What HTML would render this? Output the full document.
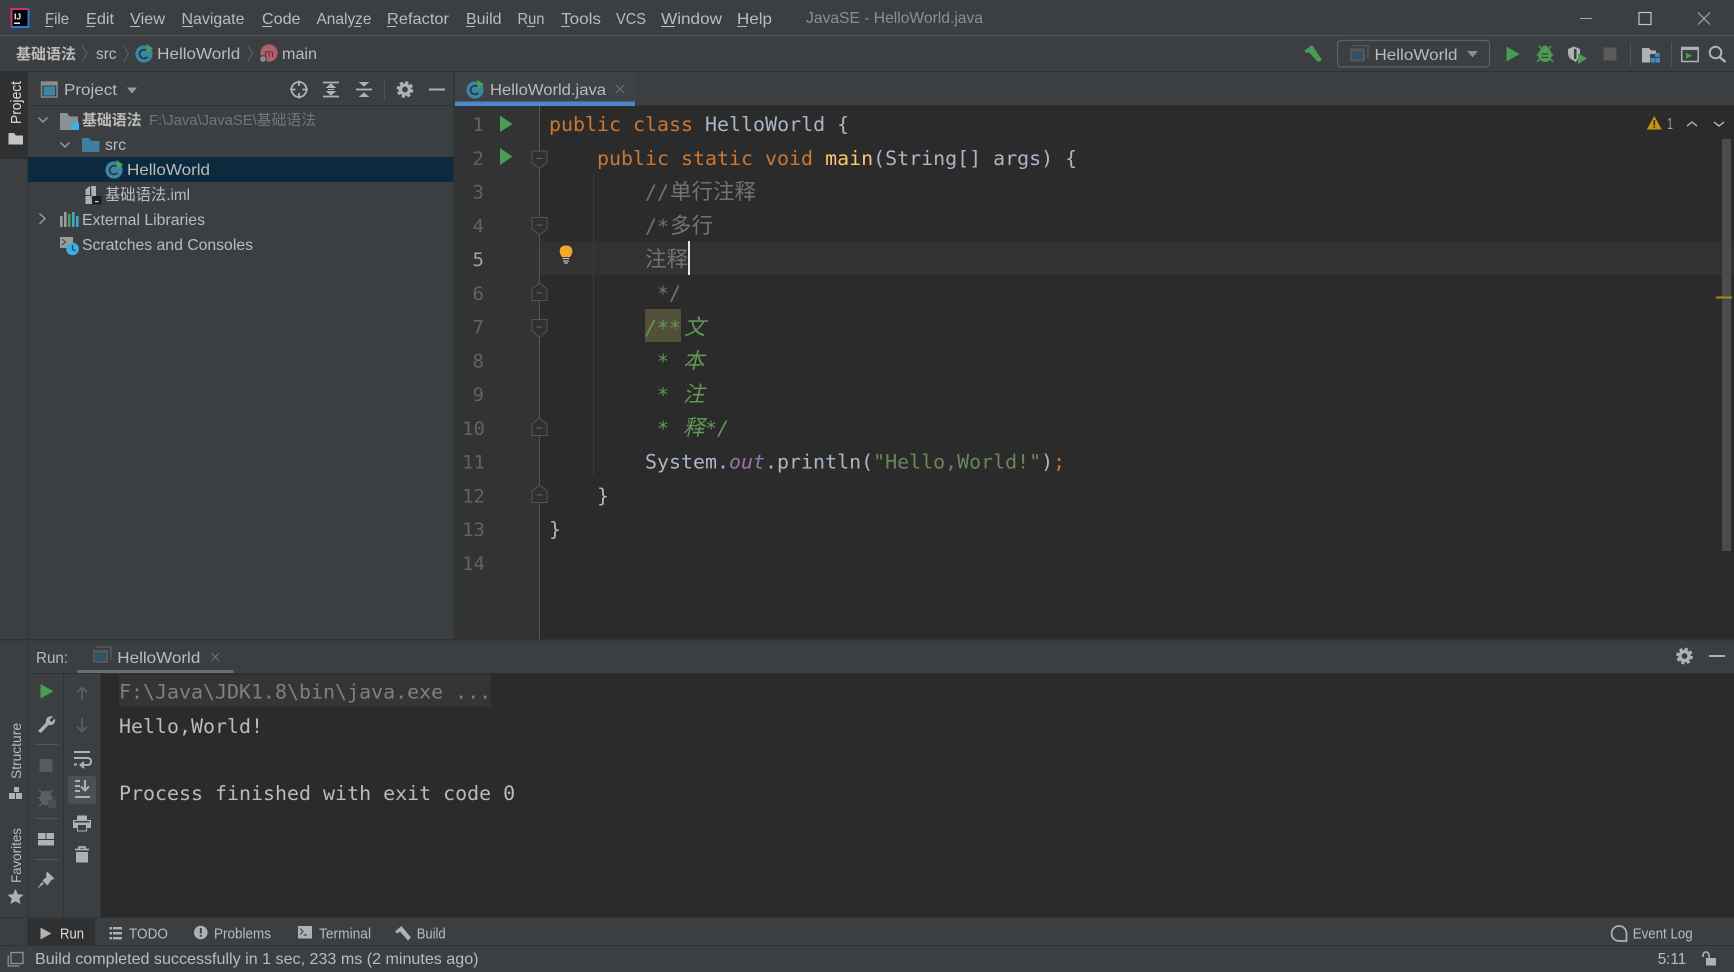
<!DOCTYPE html>
<html><head><meta charset="utf-8"><title>JavaSE - HelloWorld.java</title>
<style>
html,body{margin:0;padding:0;background:#3c3f41;overflow:hidden}
svg{display:block;position:absolute;left:0;top:0}
text{font-family:"Liberation Sans","Noto Sans CJK SC",sans-serif;font-size:16px;fill:#bbbbbb}
.s{font-size:14.5px}
.m,.m tspan{font-family:"DejaVu Sans Mono","Noto Sans CJK SC",monospace;font-size:19.95px;fill:#a9b7c6}
.m tspan.k{fill:#cc7832}
.c,.c tspan{fill:#737373}
.d,.d tspan{fill:#629755;font-style:italic}
.m tspan.cj{font-family:"Noto Sans CJK SC",sans-serif;font-size:21.5px}
.n{font-family:"DejaVu Sans Mono",monospace;font-size:19px;fill:#606366;text-anchor:end}
.con{font-family:"DejaVu Sans Mono",monospace;font-size:19.95px;fill:#bbbbbb}
</style></head><body>
<svg width="1734" height="972" viewBox="0 0 1734 972" xmlns="http://www.w3.org/2000/svg">
<defs>
<g id="cls"><circle cx="9" cy="10" r="8.6" fill="#3d86a3"/><path d="M12.4 7.2A4.4 4.4 0 1 0 12.4 12.8" fill="none" stroke="#1f3945" stroke-width="1.7"/><path d="M11.5 0V9L18 4.5Z" fill="#4aa257"/></g>
<g id="cfg"><path d="M3 0H18V13" fill="none" stroke="#54585a" stroke-width="1.6"/><rect x="0" y="3" width="15" height="13" fill="#54585a"/><rect x="2" y="6" width="11" height="8" fill="#2f5564"/></g>
<g id="foldd"><path d="M-7.5-8.5H7.5V3L0 9-7.5 3Z" fill="#2f3031" stroke="#555"/><path d="M-3-1H3" stroke="#666"/></g>
<g id="foldu"><path d="M-7.5 8.5H7.5V-3L0-9-7.5-3Z" fill="#2f3031" stroke="#555"/><path d="M-3 1H3" stroke="#666"/></g>
</defs>

<rect width="1734" height="972" fill="#3c3f41"/>

<!-- title bar -->
<rect x="0" y="35" width="1734" height="1" fill="#515658"/>
<rect x="11.5" y="9" width="17" height="18" fill="#000"/>
<path d="M11.5 27V9H28.5" fill="none" stroke="#d0307a" stroke-width="2"/>
<path d="M28.5 9V27H11.5" fill="none" stroke="#2a78d8" stroke-width="2"/>
<text x="14" y="19.5" style="font-size:8.5px;font-weight:bold;fill:#fff">IJ</text>
<rect x="14" y="22.5" width="6" height="1.4" fill="#fff"/>
<text x="45" y="24" textLength="24" lengthAdjust="spacingAndGlyphs">File</text><rect x="45" y="26" width="8" height="1" fill="#bbb"/>
<text x="86" y="24" textLength="28" lengthAdjust="spacingAndGlyphs">Edit</text><rect x="86" y="26" width="9" height="1" fill="#bbb"/>
<text x="130" y="24" textLength="35" lengthAdjust="spacingAndGlyphs">View</text><rect x="130" y="26" width="10" height="1" fill="#bbb"/>
<text x="181.5" y="24" textLength="63" lengthAdjust="spacingAndGlyphs">Navigate</text><rect x="182" y="26" width="11" height="1" fill="#bbb"/>
<text x="262" y="24" textLength="38.5" lengthAdjust="spacingAndGlyphs">Code</text><rect x="262" y="26" width="10" height="1" fill="#bbb"/>
<text x="316.5" y="24" textLength="55" lengthAdjust="spacingAndGlyphs">Analyze</text><rect x="354" y="26" width="7" height="1" fill="#bbb"/>
<text x="387" y="24" textLength="62" lengthAdjust="spacingAndGlyphs">Refactor</text><rect x="387" y="26" width="9" height="1" fill="#bbb"/>
<text x="466" y="24" textLength="35.5" lengthAdjust="spacingAndGlyphs">Build</text><rect x="466" y="26" width="9" height="1" fill="#bbb"/>
<text x="517.5" y="24" textLength="27" lengthAdjust="spacingAndGlyphs">Run</text><rect x="527" y="26" width="8" height="1" fill="#bbb"/>
<text x="561" y="24" textLength="40" lengthAdjust="spacingAndGlyphs">Tools</text><rect x="561" y="26" width="9" height="1" fill="#bbb"/>
<text x="616" y="24" textLength="30" lengthAdjust="spacingAndGlyphs">VCS</text>
<text x="661" y="24" textLength="61" lengthAdjust="spacingAndGlyphs">Window</text><rect x="661" y="26" width="14" height="1" fill="#bbb"/>
<text x="737" y="24" textLength="35" lengthAdjust="spacingAndGlyphs">Help</text><rect x="737" y="26" width="10" height="1" fill="#bbb"/>
<text x="806" y="23" textLength="177" lengthAdjust="spacingAndGlyphs" style="fill:#8c8e90">JavaSE - HelloWorld.java</text>
<path d="M1580 18.5H1592" stroke="#aaa" stroke-width="1"/>
<rect x="1639" y="12.5" width="12" height="12" fill="none" stroke="#c4c4c4" stroke-width="1.2"/>
<path d="M1698 12.5L1710 24.5M1710 12.5L1698 24.5" stroke="#b0b0b0" stroke-width="1"/>

<!-- breadcrumb / toolbar -->
<rect x="0" y="71" width="1734" height="1" fill="#323232"/>
<text x="16" y="59" textLength="60" lengthAdjust="spacingAndGlyphs" style="font-weight:bold;font-size:15px">基础语法</text>
<path d="M82 45L87 53.5L82 62" fill="none" stroke="#5f6163"/>
<text x="96" y="59" textLength="20.5" lengthAdjust="spacingAndGlyphs">src</text>
<path d="M123.5 45L128.5 53.5L123.5 62" fill="none" stroke="#5f6163"/>
<use href="#cls" x="135" y="44"/>
<text x="157.2" y="59" textLength="83" lengthAdjust="spacingAndGlyphs">HelloWorld</text>
<path d="M247.5 45L252.5 53.5L247.5 62" fill="none" stroke="#5f6163"/>
<circle cx="269" cy="53" r="8.6" fill="#b0626a"/>
<text x="264.5" y="57" style="font-size:11px;fill:#5a2b30">m</text>
<circle cx="263" cy="59" r="3.4" fill="#8a8d90" stroke="#3c3f41"/>
<text x="282" y="59" textLength="35" lengthAdjust="spacingAndGlyphs">main</text>

<path d="M1304.5 50.5L1312 45L1322 60L1318 62L1309 52.5L1306 53Z" fill="#499c54"/>
<rect x="1337.5" y="40.5" width="152" height="26.5" rx="3.5" fill="none" stroke="#5e6060" stroke-width="1.2"/>
<use href="#cfg" x="1350" y="45.5"/>
<text x="1374.5" y="60" textLength="83" lengthAdjust="spacingAndGlyphs">HelloWorld</text>
<path d="M1467 51H1478L1472.5 57.5Z" fill="#8c8e90"/>
<path d="M1506.5 46.5V61.5L1519.5 54Z" fill="#499c54"/>
<g fill="#499c54"><ellipse cx="1545" cy="55" rx="6.8" ry="7"/><circle cx="1545" cy="49" r="3.5"/><path d="M1539 46L1542 49.5M1551 46L1548 49.5M1536.5 55H1553.5M1537 61.5L1540 59M1553 61.5L1550 59" stroke="#499c54" stroke-width="1.6" fill="none"/><path d="M1541.5 54H1548.5M1541.5 57.5H1548.5" stroke="#3c3f41" stroke-width="1.2"/></g>
<path d="M1568 49L1574 46.5L1580 49V55L1576 62L1570 58.5Q1568 56 1568 53Z" fill="#afb1b3"/><rect x="1574" y="49" width="2.5" height="10" fill="#3c3f41"/>
<path d="M1578 53V64L1587 58.5Z" fill="#499c54"/>
<rect x="1603.5" y="47.5" width="13" height="13" fill="#5a5a5a"/>
<rect x="1630" y="42" width="1" height="24" fill="#515658"/>
<path d="M1642 48H1649L1651 50.5H1656V54H1650V62.5H1642Z" fill="#afb1b3"/>
<g fill="#3c8dc4"><rect x="1655" y="53" width="4.5" height="4"/><rect x="1650.5" y="58" width="4.5" height="4.5"/><rect x="1655.5" y="58" width="4.5" height="4.5"/></g>
<rect x="1671" y="42" width="1" height="24" fill="#515658"/>
<rect x="1681.7" y="47.5" width="16.5" height="14" fill="none" stroke="#afb1b3" stroke-width="1.5"/><rect x="1681" y="47" width="18" height="3" fill="#afb1b3"/>
<path d="M1686 52.5V59L1692 55.7Z" fill="#499c54"/>
<circle cx="1715.5" cy="52.5" r="5.8" fill="none" stroke="#afb1b3" stroke-width="2"/><path d="M1719.5 57L1725.5 62" stroke="#afb1b3" stroke-width="2.4"/>

<!-- left stripe -->
<rect x="27" y="72" width="1" height="845" fill="#323232"/>
<rect x="0" y="72" width="27" height="87" fill="#2e3032"/>
<text transform="translate(21,124) rotate(-90)" textLength="43" lengthAdjust="spacingAndGlyphs" style="font-size:14.5px;fill:#dedede">Project</text>
<path d="M8.5 133H14L16 135.5H23V144.5H8.5Z" fill="#c4c4c4"/>
<text transform="translate(21,779) rotate(-90)" textLength="56" lengthAdjust="spacingAndGlyphs" style="font-size:14px">Structure</text>
<g fill="#afb1b3"><rect x="9" y="793" width="6" height="6"/><rect x="16" y="793" width="6" height="6"/><rect x="14" y="787" width="5" height="5"/></g>
<text transform="translate(21,883) rotate(-90)" textLength="55" lengthAdjust="spacingAndGlyphs" style="font-size:14px">Favorites</text>
<path d="M15.5 889L17.8 894.2L23.5 894.8L19.3 898.5L20.5 904L15.5 901.2L10.5 904L11.7 898.5L7.5 894.8L13.2 894.2Z" fill="#afb1b3"/>

<!-- project panel -->
<rect x="41.5" y="82" width="15.5" height="15" fill="#3c3f41" stroke="#8a8d8f" stroke-width="1.4"/><rect x="41" y="82" width="16" height="3.5" fill="#8a8d8f"/><rect x="43.5" y="86.5" width="11.5" height="9" fill="#3a87a8"/>
<text x="64" y="95" textLength="53" lengthAdjust="spacingAndGlyphs">Project</text>
<path d="M127 87.5H137L132 93.5Z" fill="#999"/>
<circle cx="299" cy="89.5" r="7.5" fill="none" stroke="#afb1b3" stroke-width="1.8"/><path d="M299 80.5V86M299 93V98.5M290 89.5H295.5M302.5 89.5H308" stroke="#afb1b3" stroke-width="1.8"/>
<path d="M323 82.5H339M323 96.5H339" stroke="#afb1b3" stroke-width="1.8"/><path d="M327 87.5L331 84L335 87.5ZM327 91.5L331 95L335 91.5Z" fill="#afb1b3" stroke="#afb1b3"/><path d="M328 89.5H334" stroke="#afb1b3"/>
<path d="M356 89.5H372" stroke="#afb1b3" stroke-width="1.8"/><path d="M360 82.5L364 86L368 82.5ZM360 96.5L364 93L368 96.5Z" fill="#afb1b3" stroke="#afb1b3"/>
<rect x="384" y="79" width="1" height="21" fill="#4c5052"/>
<circle cx="405" cy="89.5" r="4.6" fill="none" stroke="#afb1b3" stroke-width="3.4"/><circle cx="405" cy="89.5" r="7.2" fill="none" stroke="#afb1b3" stroke-width="2.4" stroke-dasharray="3.2 2.45"/>
<path d="M429 89.5H445" stroke="#afb1b3" stroke-width="2"/>
<rect x="28" y="105" width="426" height="1" fill="#323232"/>

<path d="M38.5 117.5L43 122L47.5 117.5" fill="none" stroke="#9a9c9e" stroke-width="1.4"/>
<path d="M60 113H67L69.5 116.5H78V130H60Z" fill="#8a9197"/><rect x="71.5" y="122.5" width="7.5" height="7.5" fill="#3bb1e0"/>
<text x="82" y="125" textLength="59.5" lengthAdjust="spacingAndGlyphs" style="font-weight:bold;font-size:15px">基础语法</text>
<text x="149" y="125" textLength="167" lengthAdjust="spacingAndGlyphs" style="fill:#737577;font-size:15px">F:\Java\JavaSE\基础语法</text>

<path d="M60.5 142.5L65 147L69.5 142.5" fill="none" stroke="#9a9c9e" stroke-width="1.4"/>
<path d="M82 138H89L91.5 141H99.5V152H82Z" fill="#3d7f9e"/>
<text x="105" y="150" textLength="21" lengthAdjust="spacingAndGlyphs">src</text>

<rect x="28" y="157" width="425.5" height="25" fill="#0d293e"/>
<use href="#cls" x="105" y="160"/>
<text x="127" y="175" textLength="83" lengthAdjust="spacingAndGlyphs">HelloWorld</text>

<path d="M85.5 195V189.5L90 186V195Z" fill="#afb1b3"/><path d="M91 186H96V196H85.5V204H92Z" fill="#afb1b3"/><rect x="92.5" y="196" width="9" height="8.5" fill="#1f1f1f"/><rect x="95" y="201" width="3.5" height="1.2" fill="#ddd"/>
<text x="105" y="200" textLength="85" lengthAdjust="spacingAndGlyphs">基础语法.iml</text>

<path d="M39.5 213.5L45 218.5L39.5 224" fill="none" stroke="#9a9c9e" stroke-width="1.4"/>
<g><rect x="60" y="216" width="2.6" height="11" fill="#9a9c9e"/><rect x="64" y="212" width="2.6" height="15" fill="#9a9c9e"/><rect x="68" y="214" width="2.6" height="13" fill="#4aa257"/><rect x="72" y="212" width="2.6" height="15" fill="#4aa2c9"/><rect x="76" y="216" width="2.6" height="11" fill="#4aa2c9"/></g>
<text x="82" y="225" textLength="123" lengthAdjust="spacingAndGlyphs">External Libraries</text>

<rect x="60" y="237" width="13" height="11" fill="#9a9c9e"/><path d="M62 239L65.5 242L62 245" fill="none" stroke="#3c3f41"/><circle cx="72.5" cy="249" r="6.3" fill="#3bb1e0"/><path d="M72.5 245V249.5L75.5 251" fill="none" stroke="#1d3a48" stroke-width="1.2"/>
<text x="82" y="250" textLength="171" lengthAdjust="spacingAndGlyphs">Scratches and Consoles</text>

<!-- editor -->
<rect x="453.5" y="72" width="1" height="568" fill="#323232"/>
<rect x="454" y="106" width="1280" height="534" fill="#2b2b2b"/>
<rect x="454" y="106" width="85" height="534" fill="#313335"/>
<rect x="539" y="241" width="1195" height="34" fill="#323232"/>
<rect x="455" y="72" width="180" height="30" fill="#3f4244"/>
<rect x="455" y="101.5" width="180" height="4.5" fill="#4a88c7"/>
<rect x="635" y="105" width="1099" height="1" fill="#323232"/>
<use href="#cls" x="466" y="80"/>
<text x="490" y="95" textLength="116" lengthAdjust="spacingAndGlyphs">HelloWorld.java</text>
<path d="M616 85L624 93M624 85L616 93" stroke="#6e7072" stroke-width="1.1"/>

<path d="M539.5 106V640" stroke="#555555"/>
<path d="M593.5 174V476" stroke="#3b3b3b"/>

<text class="n" x="484" y="131">1</text>
<text class="n" x="484" y="164.8">2</text>
<text class="n" x="484" y="198.5">3</text>
<text class="n" x="484" y="232.3">4</text>
<text class="n" x="484" y="266.1" style="fill:#a4a3a3">5</text>
<text class="n" x="484" y="299.9">6</text>
<text class="n" x="484" y="333.6">7</text>
<text class="n" x="484" y="367.4">8</text>
<text class="n" x="484" y="401.2">9</text>
<text class="n" x="485" y="435">10</text>
<text class="n" x="485" y="468.7">11</text>
<text class="n" x="485" y="502.5">12</text>
<text class="n" x="485" y="536.2">13</text>
<text class="n" x="485" y="570">14</text>

<path d="M500 115.5V132L512.5 124Z" fill="#499c54"/>
<path d="M500 148V165L512.5 156.5Z" fill="#499c54"/>

<use href="#foldd" x="539.5" y="159.5"/>
<use href="#foldd" x="539.5" y="226"/>
<use href="#foldu" x="539.5" y="292"/>
<use href="#foldd" x="539.5" y="328"/>
<use href="#foldu" x="539.5" y="427"/>
<use href="#foldu" x="539.5" y="494"/>

<path d="M562 257C558 252 559 245.5 566 245.5C573 245.5 574 252 570 257Z" fill="#f2a929"/>
<path d="M562.5 258.5H569.5M563 261H569M564 263H568" stroke="#b8b8b8" stroke-width="1.3"/>

<rect x="645" y="309" width="36" height="33" fill="#52503a"/>

<text class="m" x="549" y="131"><tspan class="k">public class </tspan>HelloWorld {</text>
<text class="m" x="597" y="164.8"><tspan class="k">public static void </tspan><tspan style="fill:#ffc66d">main</tspan>(String[] args) {</text>
<text class="m c" x="645" y="199">//<tspan class="cj" x="670">单行注释</tspan></text>
<text class="m c" x="645" y="233">/*<tspan class="cj" x="670">多行</tspan></text>
<text class="m c" x="645" y="266.5"><tspan class="cj">注释</tspan></text>
<rect x="688" y="241" width="2" height="34" fill="#e8e8e8"/>
<text class="m c" x="657" y="299.9">*/</text>
<text class="m d" x="645" y="334.3">/**<tspan class="cj" x="684">文</tspan></text>
<text class="m d" x="657" y="367.8">*<tspan class="cj" x="683">本</tspan></text>
<text class="m d" x="657" y="401.5">*<tspan class="cj" x="683">注</tspan></text>
<text class="m d" x="657" y="435.2">*<tspan class="cj" x="683">释</tspan><tspan x="705">*/</tspan></text>
<text class="m" x="645" y="468.7">System.<tspan style="fill:#9876aa;font-style:italic">out</tspan>.println(<tspan style="fill:#6a8759">"Hello,World!"</tspan>)<tspan class="k">;</tspan></text>
<text class="m" x="597" y="502.5">}</text>
<text class="m" x="549" y="536.2">}</text>

<!-- editor right -->
<path d="M1654.3 116L1661.8 129.5H1646.8Z" fill="#c8920f"/><path d="M1654.3 120V125.5M1654.3 126.5V128" stroke="#2b2b2b" stroke-width="1.6"/>
<text x="1667" y="129" textLength="6" lengthAdjust="spacingAndGlyphs" style="fill:#9a9c9e">1</text>
<path d="M1687 126L1692 122L1697 126" fill="none" stroke="#bbb" stroke-width="1.4"/>
<path d="M1714 122L1719 126L1724 122" fill="none" stroke="#bbb" stroke-width="1.4"/>
<rect x="1722" y="139" width="9" height="412" fill="#4a4b4c"/>
<rect x="1716" y="296.5" width="16" height="2" fill="#b8860b"/>

<!-- run panel -->
<rect x="0" y="639" width="1734" height="1.5" fill="#323232"/>
<text x="36" y="663" textLength="32" lengthAdjust="spacingAndGlyphs">Run:</text>
<use href="#cfg" x="93" y="647"/>
<text x="117.3" y="663" textLength="83" lengthAdjust="spacingAndGlyphs">HelloWorld</text>
<path d="M211.5 653L219 661M219 653L211.5 661" stroke="#6e7072" stroke-width="1.1"/>
<rect x="77.5" y="670" width="156" height="3.5" fill="#6d7072"/>
<rect x="28" y="673" width="1706" height="1" fill="#323232"/>
<circle cx="1684.5" cy="656" r="4.6" fill="none" stroke="#afb1b3" stroke-width="3.4"/><circle cx="1684.5" cy="656" r="7.2" fill="none" stroke="#afb1b3" stroke-width="2.4" stroke-dasharray="3.2 2.45"/>
<path d="M1709 656H1725" stroke="#afb1b3" stroke-width="2"/>

<rect x="63" y="674" width="1" height="243" fill="#323232"/>
<rect x="100.5" y="674" width="1633.5" height="243" fill="#2b2b2b"/>
<rect x="119" y="675" width="372" height="32" fill="#353535"/>
<text class="con" x="119" y="698.7" style="fill:#808080">F:\Java\JDK1.8\bin\java.exe ...</text>
<text class="con" x="119" y="733">Hello,World!</text>
<text class="con" x="119" y="800">Process finished with exit code 0</text>

<path d="M40.5 684V698.5L53.5 691.2Z" fill="#499c54"/>
<path d="M38 731L46 722.5C45 718.5 48.5 715.5 53 716.5L49.5 720L51.5 722L55 718.5C56 723 52.5 726 48.5 725L41 733Z" fill="#afb1b3"/>
<rect x="34.5" y="744" width="24" height="1" fill="#515658"/>
<rect x="39.5" y="759" width="13" height="13" fill="#5a5a5a"/>
<g fill="#5c5f61"><ellipse cx="46" cy="798" rx="6" ry="7.5"/><path d="M39 790L43 793M53 790L49 793M38 798H54M39 806L43 803" stroke="#5c5f61" stroke-width="1.5"/><path d="M48 800H56V808H48Z" fill="#4b4f51"/></g>
<rect x="34.5" y="818" width="24" height="1" fill="#515658"/>
<g fill="#afb1b3"><rect x="38" y="833" width="7.5" height="6"/><rect x="46.5" y="833" width="7.5" height="6"/><rect x="38" y="840" width="16" height="5.5"/></g>
<rect x="34.5" y="859" width="24" height="1" fill="#515658"/>
<path d="M47 871.5L54.5 878.5L51 880.5L47.5 885.5L42.5 880.5L46.5 877L46 875ZM44 883.5L37 889L42 882Z" fill="#afb1b3"/>

<path d="M82 700V688M77 692.5L82 687.5L87 692.5" fill="none" stroke="#5b5e60" stroke-width="1.8"/>
<path d="M82 718V731M77 726.5L82 731.5L87 726.5" fill="none" stroke="#5b5e60" stroke-width="1.8"/>
<path d="M74 752H90M74 758H87Q91 758 91 761.5T87 765H81M84 762L80.5 765L84 768M74 764.5H77" fill="none" stroke="#afb1b3" stroke-width="2"/>
<rect x="68" y="776" width="28" height="28" rx="3" fill="#4c5052"/>
<path d="M75 781H80M75 786H80M75 791H80M85 780V790M81 786.5L85 790.5L89 786.5M75 797H90" fill="none" stroke="#afb1b3" stroke-width="2"/>
<path d="M77 815.5H87V820H91V828H87V831.5H77V828H73V820H77Z" fill="#afb1b3"/><rect x="78" y="825" width="8" height="5.5" fill="#3c3f41"/><rect x="74.5" y="821" width="15" height="1.5" fill="#3c3f41"/>
<path d="M75 849.5H89M79 849V847H85V849" stroke="#afb1b3" stroke-width="1.7" fill="none"/><path d="M76 852H88V862.5H76Z" fill="#afb1b3"/>

<!-- tool strip -->
<rect x="0" y="917" width="1734" height="1" fill="#323232"/>
<rect x="27.5" y="918.5" width="67.5" height="27" fill="#2e3032"/>
<path d="M40.5 927.5V939.5L51.5 933.5Z" fill="#afb1b3"/>
<text x="60" y="938.5" class="s" textLength="24" lengthAdjust="spacingAndGlyphs" style="fill:#dcdcdc">Run</text>
<g fill="#afb1b3"><rect x="109.5" y="927" width="2.5" height="2.4"/><rect x="113" y="927" width="9" height="2.4"/><rect x="109.5" y="932" width="2.5" height="2.4"/><rect x="113" y="932" width="9" height="2.4"/><rect x="109.5" y="937" width="2.5" height="2.4"/><rect x="113" y="937" width="9" height="2.4"/></g>
<text x="129" y="938.5" class="s" textLength="39" lengthAdjust="spacingAndGlyphs">TODO</text>
<circle cx="200.8" cy="932.5" r="6.8" fill="#afb1b3"/><rect x="199.8" y="928" width="2" height="5.5" fill="#3c3f41"/><rect x="199.8" y="934.8" width="2" height="2" fill="#3c3f41"/>
<text x="214" y="938.5" class="s" textLength="57" lengthAdjust="spacingAndGlyphs">Problems</text>
<rect x="298" y="926" width="14" height="12.5" fill="#afb1b3"/><path d="M300 928.5L303 931.5L300 934.5M303.5 935H307" fill="none" stroke="#3c3f41" stroke-width="1.2"/>
<text x="319" y="938.5" class="s" textLength="52" lengthAdjust="spacingAndGlyphs">Terminal</text>
<path d="M395 931.5L401.5 926L411 937.5L408 940.5L400 931.5L397.5 933.5Z" fill="#afb1b3"/>
<text x="416.7" y="938.5" class="s" textLength="29" lengthAdjust="spacingAndGlyphs">Build</text>
<path d="M1626.5 941H1618.5A7.5 7.5 0 1 1 1626.5 933Z" fill="none" stroke="#afb1b3" stroke-width="1.7"/>
<text x="1632.7" y="938.5" class="s" textLength="60" lengthAdjust="spacingAndGlyphs">Event Log</text>

<!-- status bar -->
<rect x="0" y="945" width="1734" height="1" fill="#323232"/>
<rect x="11" y="952.5" width="12" height="11" fill="none" stroke="#8f9193" stroke-width="1.3"/><path d="M8.2 955.5V966H19.5" fill="none" stroke="#8f9193" stroke-width="1.3"/>
<text x="35" y="964" textLength="443.5" lengthAdjust="spacingAndGlyphs">Build completed successfully in 1 sec, 233 ms (2 minutes ago)</text>
<text x="1657.7" y="964" textLength="28.5" lengthAdjust="spacingAndGlyphs">5:11</text>
<rect x="1706" y="958" width="10" height="7.5" fill="#afb1b3"/><path d="M1703 957V955A3 3 0 0 1 1709 955V958" fill="none" stroke="#afb1b3" stroke-width="1.6"/>
</svg>
</body></html>
